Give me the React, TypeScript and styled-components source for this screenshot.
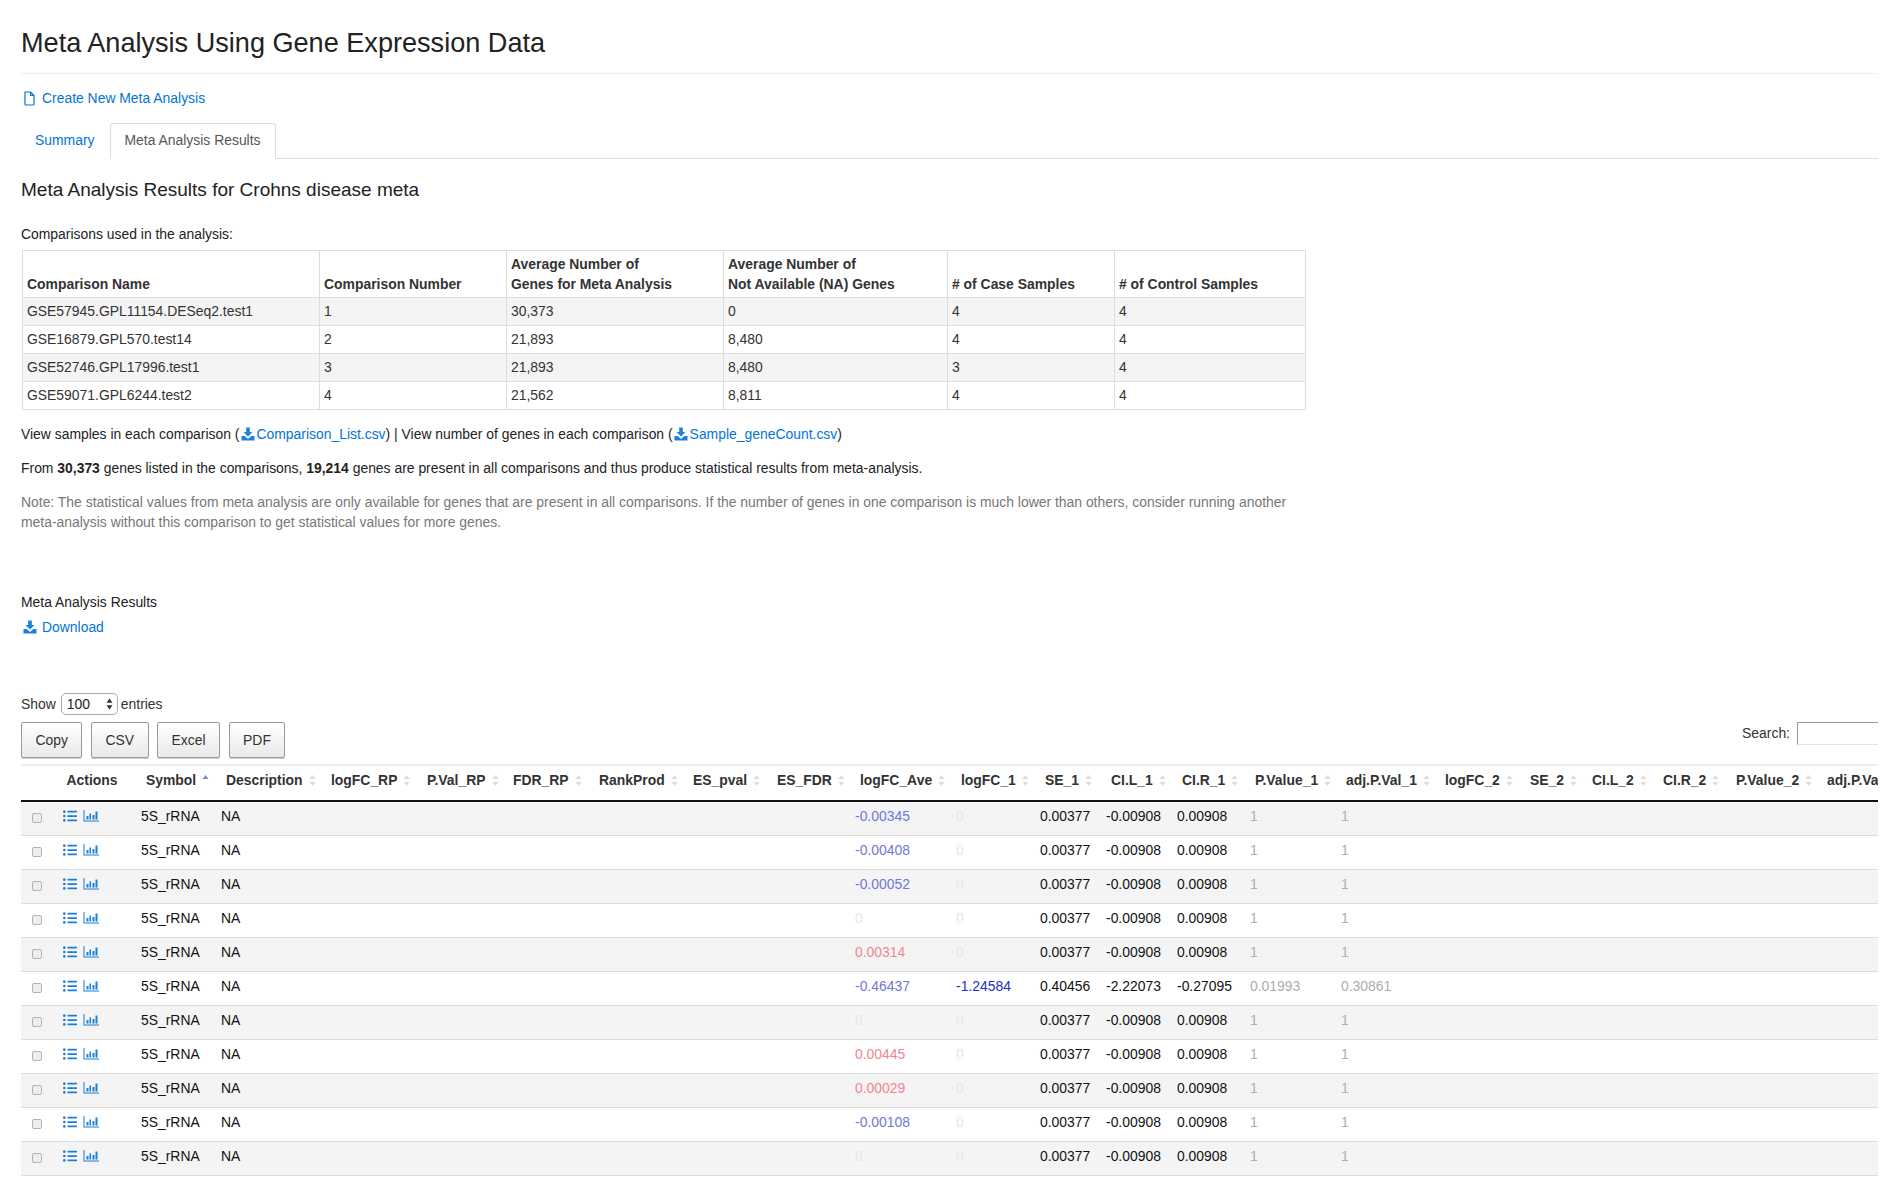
import React, {FC} from 'react';
import styled, {createGlobalStyle} from 'styled-components';
import {FaListUl} from 'react-icons/fa';

const GlobalStyle = createGlobalStyle`
  html, body {
    margin: 0;
    padding: 0;
    background: #fff;
  }

  body {
    color: #333;
    font-family: "Liberation Sans", Arial, sans-serif;
    font-size: 13.92px;
    line-height: 20px;
    overflow: hidden;
  }
`;

const Page = styled.div`
  box-sizing: border-box;
  height: 1192px;
  overflow: hidden;
  padding-left: 21px;
  width: 1878px;
`;

const Title = styled.h1`
  border-bottom: 1px solid #eee;
  color: #222;
  font-size: 27.1px;
  font-weight: 400;
  line-height: 30px;
  margin: 0;
  padding: 28px 0 15px;
`;

const Link = styled.a`
  color: #0275d8;
  text-decoration: none;
`;

const CreateRow = styled.div`
  align-items: center;
  display: flex;
  gap: 7px;
  margin: 14px 0 0 3px;
`;

const Tabs = styled.div`
  border-bottom: 1px solid #ddd;
  display: flex;
  margin-top: 15px;
`;

const Tab = styled.div<{$active?: boolean}>`
  background: #fff;
  border: 1px solid ${p => (p.$active ? '#ddd' : 'transparent')};
  border-bottom: none;
  border-radius: 3px 3px 0 0;
  color: ${p => (p.$active ? '#555' : '#0275d8')};
  height: 34px;
  line-height: 32px;
  margin-bottom: -1px;
  padding: 0 14px 1px ${p => (p.$active ? 14 : 13)}px;
`;

const Heading = styled.h3`
  color: #222;
  font-size: 19px;
  font-weight: 400;
  line-height: 24px;
  margin: 19px 0 0;
`;

const Label = styled.div`
  color: #222;
`;

const ComparisonLabel = styled(Label)`
  margin: 22px 0 6px;
`;

const ComparisonTable = styled.table`
  border-collapse: collapse;
  margin-left: 1px;
  table-layout: fixed;
  width: 1283px;

  th, td {
    border: 1px solid #ddd;
    padding: 0 4px;
    text-align: left;
  }

  th {
    box-sizing: border-box;
    color: #333;
    font-weight: 700;
    height: 47px;
    padding-bottom: 3px;
    vertical-align: bottom;
  }

  td {
    height: 27px;
    padding-bottom: 1px;
    box-sizing: border-box;
    height: 28px;
  }

  tbody tr:nth-child(odd) {
    background: #f4f4f5;
  }
`;

const Paragraph = styled.p`
  color: #222;
  margin: 14px 0 0;
`;

const Note = styled.p`
  color: #777;
  margin: 14px 0 0;
  max-width: 1284px;
`;

const InlineLink = styled(Link)`
  svg {
    margin: 0 1.5px;
    vertical-align: -2px;
  }
`;

const ResultsLabel = styled(Label)`
  margin-top: 60px;
`;

const DownloadRow = styled.div`
  align-items: center;
  display: flex;
  gap: 5px;
  margin: 5px 0 0 2px;
`;

const ShowRow = styled.div`
  align-items: center;
  color: #333;
  display: flex;
  gap: 5px;
  height: 22px;
  margin-top: 56px;
`;

const SelectBox = styled.div`
  align-items: center;
  border: 1px solid #aaa;
  border-radius: 5px;
  box-sizing: border-box;
  color: #222;
  display: flex;
  height: 22px;
  justify-content: space-between;
  margin-right: -2px;
  padding: 0 4px 0 5px;
  width: 57px;
`;

const Toolbar = styled.div`
  display: flex;
  justify-content: space-between;
  margin-top: 7px;
`;

const ButtonGroup = styled.div`
  display: flex;
  gap: 8.5px;
`;

const ExportButton = styled.button`
  background: linear-gradient(to bottom, #fff 0%, #e9e9e9 100%);
  border: 1px solid #999;
  border-radius: 2px;
  box-shadow: 0 1px 0 #ccc;
  color: #333;
  font-family: inherit;
  font-size: 13.92px;
  height: 36px;
  padding: 0 13.5px;
`;

const SearchBox = styled.label`
  color: #333;
  display: flex;
  gap: 7px;
  height: 23px;
  line-height: 23px;
  margin-right: -95px;
`;

const SearchInput = styled.input`
  background: #fff;
  border: 1px solid #e4e4e4;
  border-left-color: #999;
  border-top-color: #999;
  box-sizing: border-box;
  height: 23px;
  margin: 0;
  padding: 0;
  width: 176px;
`;

const TableClip = styled.div`
  border-top: 2px solid #eee;
  margin-top: 6px;
  overflow: hidden;
`;

const ResultsTable = styled.table`
  border-collapse: separate;
  border-spacing: 0;
  table-layout: fixed;
  width: 1901px;
`;

const HeadCell = styled.th<{$center?: boolean}>`
  border-bottom: 2px solid #111;
  box-sizing: border-box;
  color: #333;
  font-weight: 700;
  height: 36px;
  padding: 0 0 6px ${p => (p.$center ? 0 : 15)}px;
  text-align: ${p => (p.$center ? 'center' : 'left')};
  white-space: nowrap;
`;

const Row = styled.tr<{$striped: boolean}>`
  background: ${p => (p.$striped ? '#f4f4f5' : '#fff')};
`;

const Cell = styled.td<{$tone?: string}>`
  border-bottom: 1px solid #ddd;
  box-sizing: border-box;
  color: ${p => p.$tone ?? '#111'};
  height: 34px;
  padding: 0 0 5px 10px;
  white-space: nowrap;
`;

const CheckCell = styled(Cell)`
  padding: 0 0 5px 11px;
`;

const RowCheck = styled.input`
  appearance: none;
  background: #eee;
  border: 1px solid #b4b4b4;
  border-radius: 2px;
  box-sizing: border-box;
  display: block;
  height: 10px;
  margin: 3px 0 0;
  width: 10px;
`;

const ActionIcons = styled.div`
  align-items: center;
  color: #1b7fd6;
  display: flex;
  gap: 6px;
`;

const SortMark = styled.svg`
  margin-left: 6px;
  vertical-align: -2px;
`;

const SortIcon: FC<{active?: boolean}> = ({active}) => (
  <SortMark width="7" height="13" viewBox="0 0 7 13">
    <path d="M3.5 1 L6.5 5 H0.5 Z" fill={active ? '#7f88c9' : '#dcdcdc'} />
    {!active && <path d="M3.5 12 L6.5 8 H0.5 Z" fill="#dcdcdc" />}
  </SortMark>
);

const DownloadIcon: FC<{size?: number}> = ({size = 14}) => (
  <svg width={size} height={size} viewBox="0 0 14 14" fill="#1a7fe0">
    <path d="M5.2 0.5 H8.8 V5 H11.4 L7 9.6 L2.6 5 H5.2 Z" />
    <path d="M0.5 9 H3.6 L7 11.9 L10.4 9 H13.5 V13.5 H0.5 Z" />
  </svg>
);

const FileIcon: FC = () => (
  <svg width="11" height="15" viewBox="0 0 11 15" fill="none" stroke="#0275d8" strokeWidth="1.2">
    <path d="M1 1 H6.6 L10 4.4 V13 Q10 14 9 14 H2 Q1 14 1 13 Z" />
    <path d="M6.6 1 V4.4 H10" />
  </svg>
);

const ChartIcon: FC = () => (
  <svg width="16" height="12" viewBox="0 0 16 12" fill="currentColor">
    <path d="M0.5 0 H1.5 V10.5 H16 V11.5 H0.5 Z" />
    <rect x="3.5" y="6" width="2" height="3.5" />
    <rect x="6.5" y="3.5" width="1.5" height="6" />
    <rect x="9.5" y="5" width="2" height="4.5" />
    <rect x="12.5" y="1.5" width="2" height="8" />
  </svg>
);

const SelectArrows: FC = () => (
  <svg width="7" height="12" viewBox="0 0 7 12" fill="#333">
    <path d="M3.5 0.5 L6.5 4.8 H0.5 Z" />
    <path d="M3.5 11.5 L6.5 7.2 H0.5 Z" />
  </svg>
);

const comparisonWidths = [297, 187, 217, 224, 167, 191];

const comparisonRows = [
  ['GSE57945.GPL11154.DESeq2.test1', '1', '30,373', '0', '4', '4'],
  ['GSE16879.GPL570.test14', '2', '21,893', '8,480', '4', '4'],
  ['GSE52746.GPL17996.test1', '3', '21,893', '8,480', '3', '4'],
  ['GSE59071.GPL6244.test2', '4', '21,562', '8,811', '4', '4'],
];

const columns = [
  {name: '', width: 32},
  {name: 'Actions', width: 78},
  {name: 'Symbol', width: 80},
  {name: 'Description', width: 105},
  {name: 'logFC_RP', width: 96},
  {name: 'P.Val_RP', width: 86},
  {name: 'FDR_RP', width: 86},
  {name: 'RankProd', width: 94},
  {name: 'ES_pval', width: 84},
  {name: 'ES_FDR', width: 83},
  {name: 'logFC_Ave', width: 101},
  {name: 'logFC_1', width: 84},
  {name: 'SE_1', width: 66},
  {name: 'CI.L_1', width: 71},
  {name: 'CI.R_1', width: 73},
  {name: 'P.Value_1', width: 91},
  {name: 'adj.P.Val_1', width: 99},
  {name: 'logFC_2', width: 85},
  {name: 'SE_2', width: 62},
  {name: 'CI.L_2', width: 71},
  {name: 'CI.R_2', width: 73},
  {name: 'P.Value_2', width: 91},
  {name: 'adj.P.Val_2', width: 110},
];

const averages = [
  '-0.00345', '-0.00408', '-0.00052', '0', '0.00314', '-0.46437',
  '0', '0.00445', '0.00029', '-0.00108', '0',
];

const toneFor = (value: string) => {
  if (value === '0') {
    return '#e6e7e8';
  }
  return value.startsWith('-') ? '#6f77d8' : '#f0868e';
};

export default function App() {
  return (
    <Page>
      <GlobalStyle />
      <Title>Meta Analysis Using Gene Expression Data</Title>
      <CreateRow>
        <FileIcon />
        <Link>Create New Meta Analysis</Link>
      </CreateRow>

      <Tabs>
        <Tab>Summary</Tab>
        <Tab $active>Meta Analysis Results</Tab>
      </Tabs>

      <Heading>Meta Analysis Results for Crohns disease meta</Heading>
      <ComparisonLabel>Comparisons used in the analysis:</ComparisonLabel>

      <ComparisonTable>
        <colgroup>
          {comparisonWidths.map((width, i) => <col key={i} width={width} />)}
        </colgroup>
        <thead>
          <tr>
            <th>Comparison Name</th>
            <th>Comparison Number</th>
            <th>Average Number of<br />Genes for Meta Analysis</th>
            <th>Average Number of<br />Not Available (NA) Genes</th>
            <th># of Case Samples</th>
            <th># of Control Samples</th>
          </tr>
        </thead>
        <tbody>
          {comparisonRows.map(row => (
            <tr key={row[0]}>
              {row.map((value, i) => <td key={i}>{value}</td>)}
            </tr>
          ))}
        </tbody>
      </ComparisonTable>

      <Paragraph>
        View samples in each comparison (
        <InlineLink><DownloadIcon />Comparison_List.csv</InlineLink>
        ) | View number of genes in each comparison (
        <InlineLink><DownloadIcon />Sample_geneCount.csv</InlineLink>
        )
      </Paragraph>
      <Paragraph>
        From <b>30,373</b> genes listed in the comparisons, <b>19,214</b> genes are present in all
        comparisons and thus produce statistical results from meta-analysis.
      </Paragraph>
      <Note>
        Note: The statistical values from meta analysis are only available for genes that are
        present in all comparisons. If the number of genes in one comparison is much lower than
        others, consider running another meta-analysis without this comparison to get statistical
        values for more genes.
      </Note>

      <ResultsLabel>Meta Analysis Results</ResultsLabel>
      <DownloadRow>
        <DownloadIcon />
        <Link>Download</Link>
      </DownloadRow>

      <ShowRow>
        Show
        <SelectBox>100<SelectArrows /></SelectBox>
        entries
      </ShowRow>

      <Toolbar>
        <ButtonGroup>
          <ExportButton>Copy</ExportButton>
          <ExportButton>CSV</ExportButton>
          <ExportButton>Excel</ExportButton>
          <ExportButton>PDF</ExportButton>
        </ButtonGroup>
        <SearchBox>
          Search:
          <SearchInput type="search" />
        </SearchBox>
      </Toolbar>

      <TableClip>
        <ResultsTable>
          <colgroup>
            {columns.map(column => <col key={column.name} width={column.width} />)}
          </colgroup>
          <thead>
            <tr>
              {columns.map(column => (
                <HeadCell key={column.name} $center={column.name === 'Actions' || column.name === ''}>
                  {column.name}
                  {column.name !== '' && column.name !== 'Actions' && (
                    <SortIcon active={column.name === 'Symbol'} />
                  )}
                </HeadCell>
              ))}
            </tr>
          </thead>
          <tbody>
            {averages.map((average, i) => {
              const changed = average === '-0.46437';
              return (
                <Row key={i} $striped={i % 2 === 0}>
                  <CheckCell><RowCheck type="checkbox" /></CheckCell>
                  <Cell>
                    <ActionIcons>
                      <FaListUl size={14} />
                      <ChartIcon />
                    </ActionIcons>
                  </Cell>
                  <Cell>5S_rRNA</Cell>
                  <Cell>NA</Cell>
                  <Cell /><Cell /><Cell /><Cell /><Cell /><Cell />
                  <Cell $tone={toneFor(average)}>{average}</Cell>
                  <Cell $tone={changed ? '#1c2fc4' : '#e6e7e8'}>{changed ? '-1.24584' : '0'}</Cell>
                  <Cell>{changed ? '0.40456' : '0.00377'}</Cell>
                  <Cell>{changed ? '-2.22073' : '-0.00908'}</Cell>
                  <Cell>{changed ? '-0.27095' : '0.00908'}</Cell>
                  <Cell $tone="#a9aeb4">{changed ? '0.01993' : '1'}</Cell>
                  <Cell $tone="#a9aeb4">{changed ? '0.30861' : '1'}</Cell>
                  <Cell /><Cell /><Cell /><Cell /><Cell /><Cell />
                </Row>
              );
            })}
          </tbody>
        </ResultsTable>
      </TableClip>
    </Page>
  );
}
